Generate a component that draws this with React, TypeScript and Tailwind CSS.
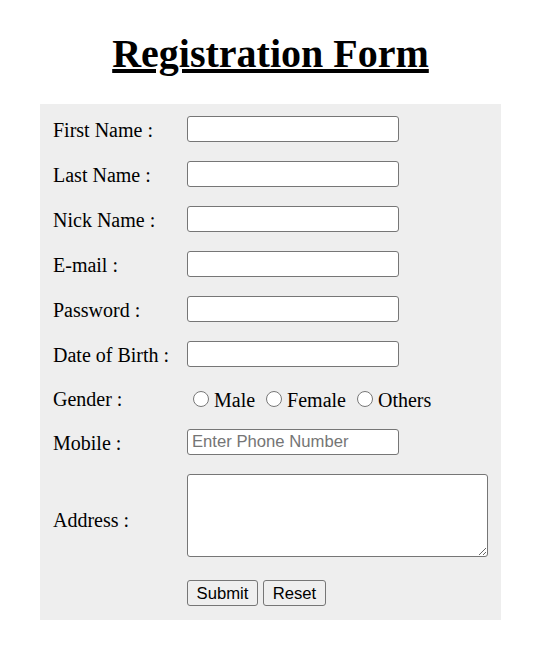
const serif = { fontFamily: '"Liberation Serif", "Times New Roman", serif' };

const textRows = ['First Name :', 'Last Name :', 'Nick Name :', 'E-mail :', 'Password :', 'Date of Birth :'];

function Label({ children, className = '' }: { children: React.ReactNode; className?: string }) {
  return (
    <div className={`w-[147px] shrink-0 pl-[13px] pt-[2px] text-[20px] text-black ${className}`}>{children}</div>
  );
}

const inputCls =
  "h-[26px] w-[212px] rounded-[3px] border border-[#767676] bg-white px-[4px] font-['Liberation_Sans',Arial,sans-serif] text-[16.67px] text-black outline-none placeholder:text-[#757575]";

const buttonCls =
  "h-[26px] rounded-[3px] border border-[#767676] bg-[#efefef] font-['Liberation_Sans',Arial,sans-serif] text-[16.67px] text-black";

export default function App() {
  return (
    <div className="w-[541px] bg-white pb-[43px]" style={serif}>
      <h1 className="pt-[31px] text-center text-[40px] leading-[46px] font-bold text-black underline">
        Registration Form
      </h1>

      <form className="mx-auto mt-[27px] w-[461px] bg-[#eeeeee] pt-[2px]">
        {textRows.map((label) => (
          <div key={label} className="flex h-[45px] items-center">
            <Label>{label}</Label>
            <input type="text" className={inputCls} />
          </div>
        ))}

        {/* Gender */}
        <div className="flex h-[43px] items-center">
          <Label>Gender :</Label>
          <div className="mt-[5px] flex items-center text-[20px] text-black">
            <input type="radio" name="gender" className="mr-[5px] ml-[6px] -mt-[3px] h-4 w-4" />
            <span>Male</span>
            <input type="radio" name="gender" className="mr-[5px] ml-[11px] -mt-[3px] h-4 w-4" />
            <span>Female</span>
            <input type="radio" name="gender" className="mr-[5px] ml-[11px] -mt-[3px] h-4 w-4" />
            <span>Others</span>
          </div>
        </div>

        <div className="flex h-[45px] items-center">
          <Label>Mobile :</Label>
          <input type="text" placeholder="Enter Phone Number" className={inputCls} />
        </div>

        <div className="flex h-[102px] items-center">
          <Label className="pt-[9px]">Address :</Label>
          <textarea className="h-[83px] w-[301px] resize rounded-[3px] border border-[#767676] bg-white outline-none" />
        </div>

        <div className="flex h-[54px] items-center pb-[1px]">
          <div className="w-[147px] shrink-0" />
          <div className="flex gap-[5px]">
            <button type="submit" className={`${buttonCls} w-[71px]`}>Submit</button>
            <button type="reset" className={`${buttonCls} w-[63px]`}>Reset</button>
          </div>
        </div>
      </form>
    </div>
  );
}
